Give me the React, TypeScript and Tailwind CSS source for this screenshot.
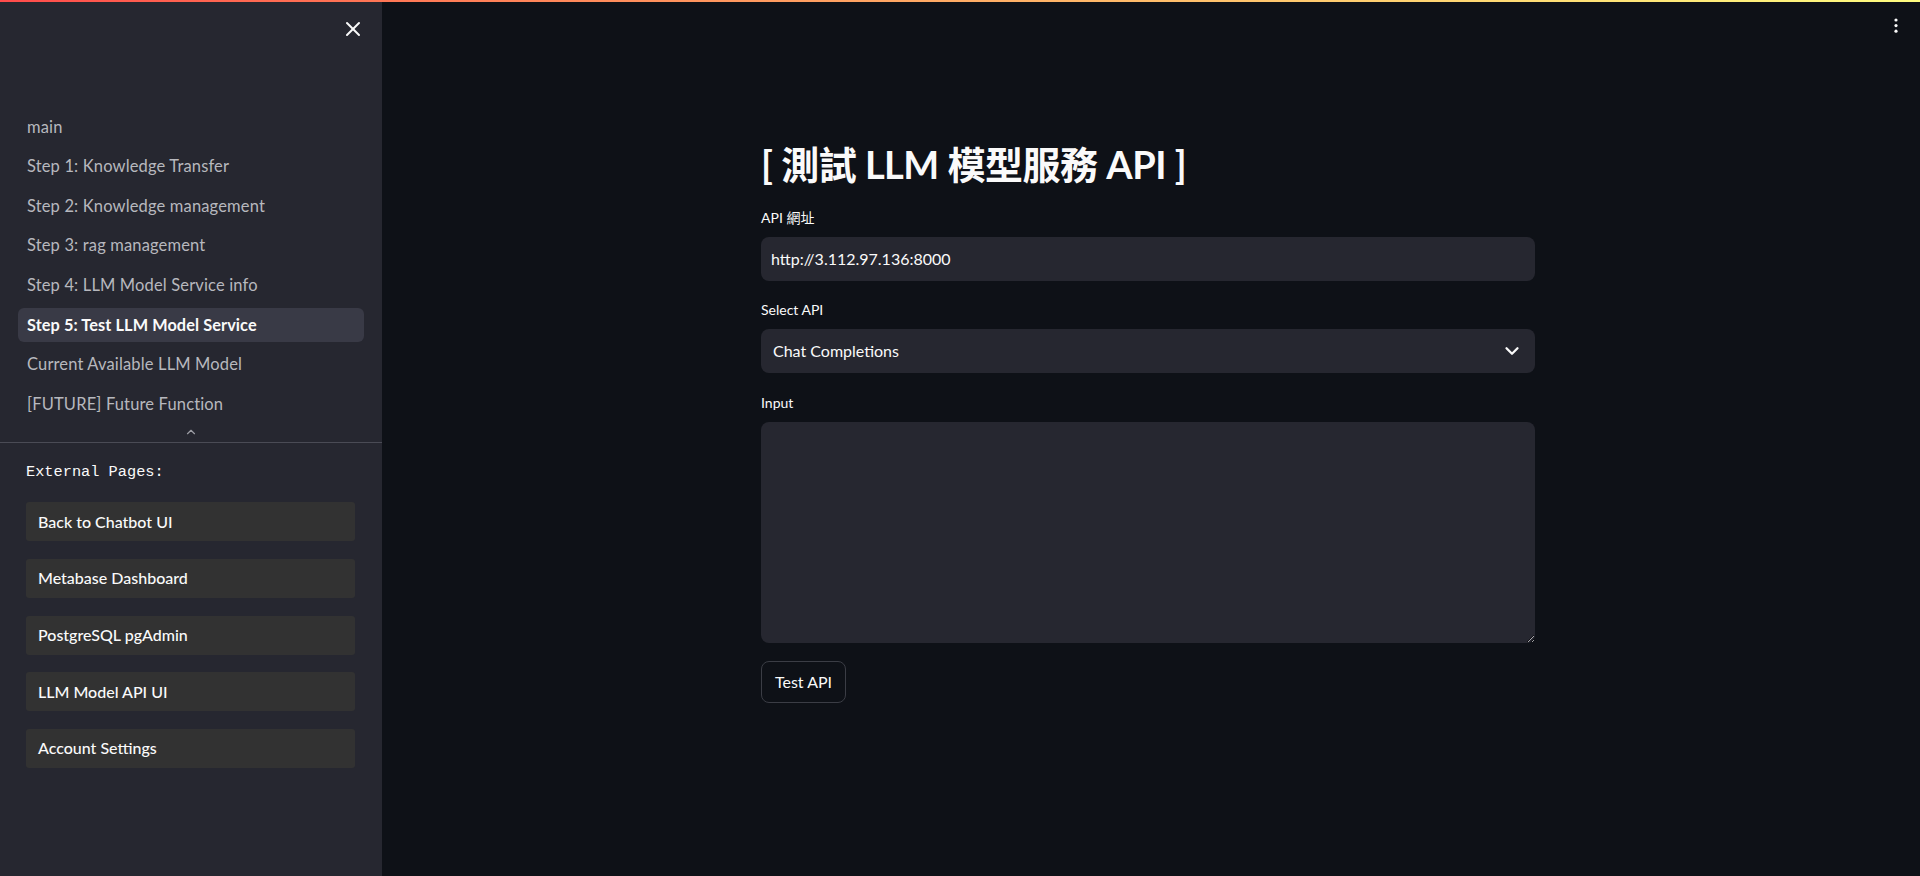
import React from 'react';
import { X, ChevronDown, ChevronUp } from 'lucide-react';

const navItems = [
    'main',
    'Step 1: Knowledge Transfer',
    'Step 2: Knowledge management',
    'Step 3: rag management',
    'Step 4: LLM Model Service info',
    'Step 5: Test LLM Model Service',
    'Current Available LLM Model',
    '[FUTURE] Future Function',
];

const externalLinks = [
    'Back to Chatbot UI',
    'Metabase Dashboard',
    'PostgreSQL pgAdmin',
    'LLM Model API UI',
    'Account Settings',
];

const ACTIVE = 'Step 5: Test LLM Model Service';

export default function App() {
    return (
        <div
            className="relative flex h-screen w-full overflow-hidden bg-[#0e1117] text-[#fafafa] [color-scheme:dark]"
            style={{ fontFamily: 'Lato, "Noto Sans CJK TC", sans-serif' }}
        >
            {/* Top decoration bar */}
            <div className="absolute top-0 left-0 right-0 z-20 h-[2px] bg-gradient-to-r from-[#ff4b4b] to-[#fffd80]"></div>

            {/* Sidebar */}
            <aside className="flex w-[382px] shrink-0 flex-col bg-[#262730]">
                <div className="flex h-[58px] items-center justify-end pr-[15px]">
                    <button className="flex h-[28px] w-[28px] items-center justify-center text-[#fafafa]">
                        <X size={24} strokeWidth={2} />
                    </button>
                </div>

                <nav className="mt-[52px] flex flex-col gap-[5.6px] px-[18px]">
                    {navItems.map((item) => {
                        const active = item === ACTIVE;
                        return (
                            <a
                                key={item}
                                className={
                                    active
                                        ? 'flex h-[34px] items-center rounded-md bg-[#393a46] pl-[9px] text-[16.3px] font-bold tracking-[0.1px] text-[#fafafa]'
                                        : 'flex h-[34px] items-center rounded-md pl-[9px] text-[16.5px] tracking-[0.15px] text-[#b7b8be]'
                                }
                            >
                                {item}
                            </a>
                        );
                    })}
                </nav>

                <div className="mt-[4px] flex h-[14px] items-center justify-center text-[#9c9da4]">
                    <ChevronUp size={14} strokeWidth={2} />
                </div>
                <div className="mt-[3px] h-px w-full bg-[#4a4b55]"></div>

                <div className="px-[26px]">
                    <p
                        className="mt-[19px] text-[15.3px] leading-[20px] text-[#fafafa]"
                        style={{ fontFamily: '"Liberation Mono", "DejaVu Sans Mono", monospace' }}
                    >
                        External Pages:
                    </p>
                    <div className="mt-[20px] flex w-[329px] flex-col gap-[17.7px]">
                        {externalLinks.map((link) => (
                            <a
                                key={link}
                                className="flex h-[39px] items-center rounded-[3px] bg-[#323232] pl-[12px] text-[16px] font-medium text-[#fafafa]"
                            >
                                {link}
                            </a>
                        ))}
                    </div>
                </div>
            </aside>

            {/* Main */}
            <main className="relative flex-1 overflow-y-auto">
                <button className="absolute top-[14px] right-[14px] flex h-[24px] w-[20px] items-center justify-center">
                    <svg width="4" height="16" viewBox="0 0 4 16" fill="#fafafa">
                        <circle cx="2" cy="2" r="1.6" />
                        <circle cx="2" cy="7.6" r="1.6" />
                        <circle cx="2" cy="13.2" r="1.6" />
                    </svg>
                </button>

                <div className="mx-auto flex w-[774px] -translate-x-[3px] flex-col pt-[140px]">
                    <h1 className="h-[48px] text-[38px] leading-[48px] font-bold tracking-[-0.5px] text-[#fafafa]">
                        [ 測試 LLM 模型服務 API ]
                    </h1>

                    <label className="mt-[20px] text-[14px] leading-[20px] text-[#fafafa]">API 網址</label>
                    <div className="mt-[9px] flex h-[44px] items-center rounded-lg bg-[#262730] pl-[10px] text-[16px] text-[#fafafa]">
                        http://3.112.97.136:8000
                    </div>

                    <label className="mt-[19px] text-[14px] leading-[20px] text-[#fafafa]">Select API</label>
                    <div className="mt-[9px] flex h-[44px] items-center justify-between rounded-lg bg-[#262730] pr-[12px] pl-[12px] text-[16px] text-[#fafafa]">
                        <span>Chat Completions</span>
                        <ChevronDown size={22} strokeWidth={2.5} />
                    </div>

                    <label className="mt-[20px] text-[14px] leading-[20px] text-[#fafafa]">Input</label>
                    <textarea className="mt-[9px] h-[221px] resize-y rounded-lg bg-[#262730] outline-none"></textarea>

                    <div className="mt-[18px]">
                        <button className="h-[42px] rounded-lg border border-[#3b3d45] bg-[#0e1117] px-[13px] text-[16px] text-[#fafafa]">
                            Test API
                        </button>
                    </div>
                </div>
            </main>
        </div>
    );
}
